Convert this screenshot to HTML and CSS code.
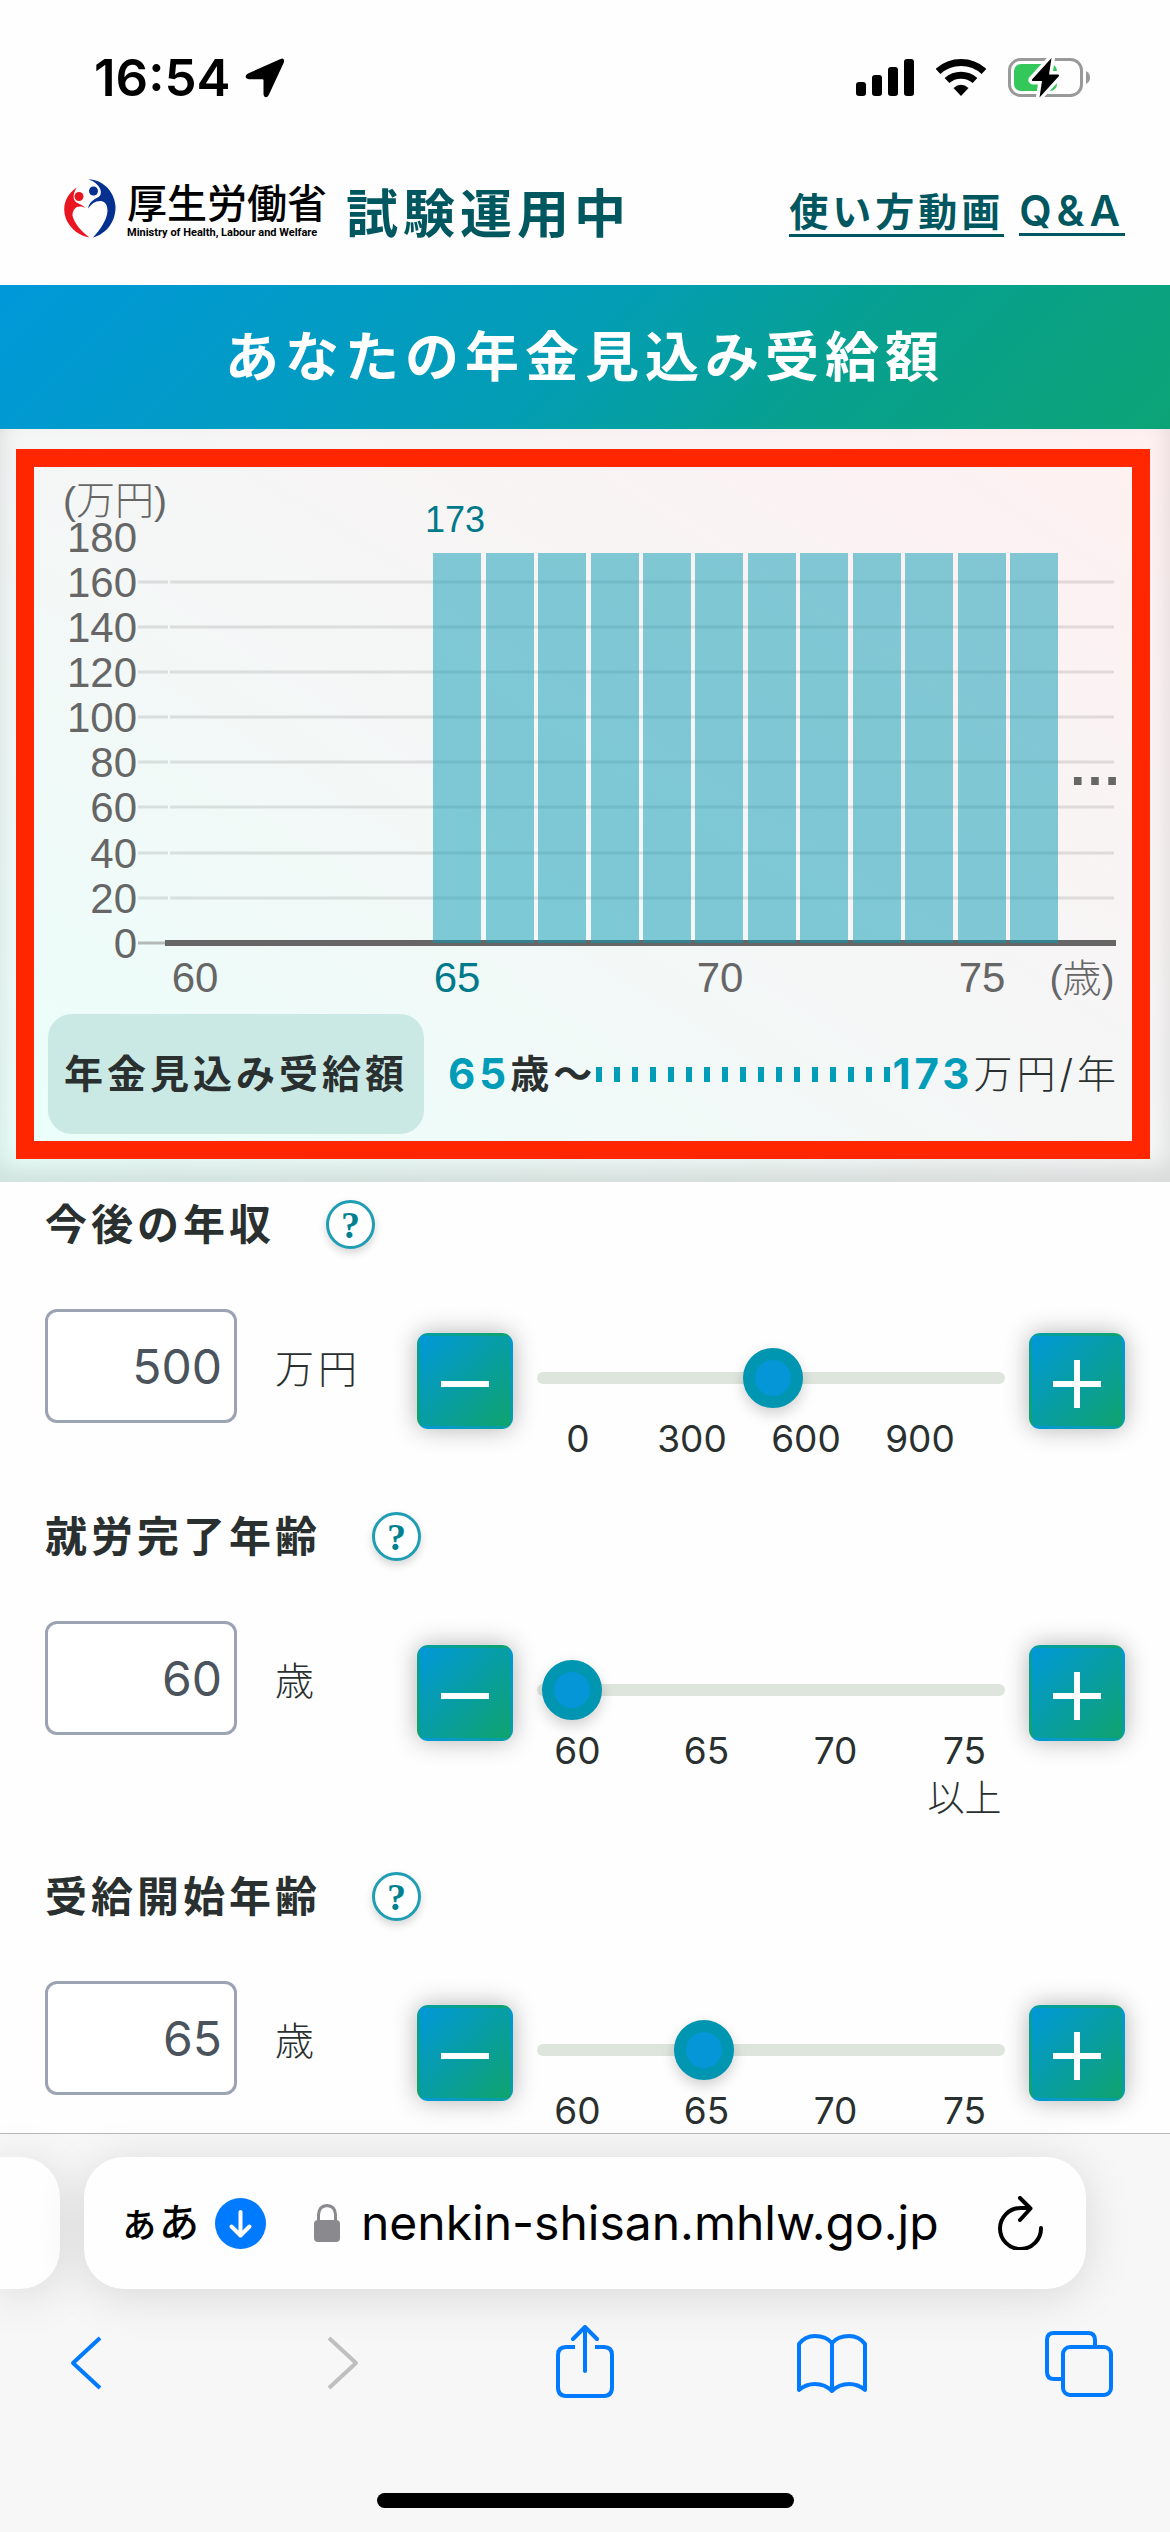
FILE: index.html
```html
<!DOCTYPE html>
<html lang="ja">
<head>
<meta charset="utf-8">
<meta name="viewport" content="width=device-width, initial-scale=1">
<title>あなたの年金見込み受給額</title>
<link rel="stylesheet" href="styles.css">
</head>
<body>
<div class="screen">
  <div class="status">
    <span class="status-time">16:54</span>
    <svg class="status-location" width="40" height="40" viewBox="0 0 40 40"><path d="M35 1.200 L3 15.500 Q.4 17 .6 19 Q1 21 4 21.200 H17.500 Q18.500 21.200 18.500 22.500 V36 Q18.700 39 21 39.200 Q23 39 24 36.500 L38.600 5 Q40 1 37.500 .4 Q36.500 .3 35 1.200Z"/></svg>
    <div class="status-icons">
      <svg width="58" height="38" viewBox="0 0 58 38"><rect x="0" y="23" width="10" height="14" rx="3"/><rect x="16" y="16" width="10" height="21" rx="3"/><rect x="32" y="8" width="10" height="29" rx="3"/><rect x="48" y="0" width="10" height="37" rx="3"/></svg>
      <svg width="50" height="38" viewBox="0 0 50 38"><path d="M2 12.500 A34 34 0 0 1 48 12.500" fill="none" stroke="#000" stroke-width="7"/><path d="M11 21.500 A21 21 0 0 1 39 21.500" fill="none" stroke="#000" stroke-width="7"/><path d="M17.500 29 Q25 22.500 32.500 29 L25 37Z"/></svg>
      <svg width="83" height="40" viewBox="0 0 83 40"><rect x="1.500" y="1.500" width="72" height="36" rx="11" fill="none" stroke="#999" stroke-width="3"/><rect x="6" y="6" width="43" height="27" rx="7" fill="#34c759"/><path d="M78 13 Q82 15 82 19.500 Q82 24 78 26Z" fill="#999"/><path d="M43.500 0 L24 21.500 Q23.500 23 25 23 H34 L31.500 39 L51 18 Q51.500 16.500 50 16.500 H41Z" stroke="#fefefe" stroke-width="7"/><path d="M43.500 0 L24 21.500 Q23.500 23 25 23 H34 L31.500 39.500 L51 18 Q51.500 16.500 50 16.500 H41Z"/></svg>
    </div>
  </div>

  <header class="header">
    <div class="logo">
      <svg width="52" height="59" viewBox="0 0 52 59">
        <g fill="#e91520"><circle cx="15" cy="17.500" r="4.500"/><path d="M13 8.500 C-1 17 -3.500 34 5.500 46 C10.500 53 17.500 57 25.500 58.500 C17 52 10 44 8.500 36.500 C8.500 28.500 15 25 22 29.500 C17.500 25 14 24.500 12.500 23.500 C8.500 21 8.500 14.500 13 8.500Z"/></g>
        <g fill="#04318f"><circle cx="29.500" cy="12" r="4.500"/><path d="M24.500 .5 C36 0 50 10 51.500 27 C52 43 42 55 29 58.500 C36 51 43 41 43.500 32 C43.500 24 39.500 22 36 22 C31 22 27.500 25 24 29.500 C25.500 22.500 30 20.500 34.500 18 C40 14.500 36 4 24.500 .5Z"/></g>
      </svg>
      <div class="logo-text">
        <span class="logo-ja">厚生労働省</span>
        <span class="logo-en">Ministry of Health, Labour and Welfare</span>
      </div>
    </div>
    <p class="trial">試験運用中</p>
    <nav class="links"><a href="#video">使い方動画</a><a class="latin" href="#qa">Q&amp;A</a></nav>
  </header>

  <h1 class="banner">あなたの年金見込み受給額</h1>

  <main class="main">
    <section class="result">
      <div class="frame">
        <svg class="chart" viewBox="0 0 1098 547" role="img" aria-label="年金見込み受給額のグラフ">
          <g class="grid">
            <path d="M104 115H134M136 115H1080M104 160H134M136 160H1080M104 205H134M136 205H1080M104 250H134M136 250H1080M104 295H134M136 295H1080M104 340H134M136 340H1080M104 386H134M136 386H1080M104 431H134M136 431H1080"/>
          </g>
          <path class="zero-tick" d="M104 476H131"/>
          <path class="axis" d="M131 476H1082"/>
          <g class="bars">
            <rect x="399" y="86" width="48" height="390"/><rect x="452" y="86" width="48" height="390"/><rect x="504" y="86" width="48" height="390"/><rect x="557" y="86" width="48" height="390"/><rect x="609" y="86" width="48" height="390"/><rect x="661" y="86" width="48" height="390"/><rect x="714" y="86" width="48" height="390"/><rect x="766" y="86" width="48" height="390"/><rect x="819" y="86" width="48" height="390"/><rect x="871" y="86" width="48" height="390"/><rect x="924" y="86" width="48" height="390"/><rect x="976" y="86" width="48" height="390"/>
          </g>
          <g class="labels">
            <text class="axis-unit" x="29" y="47">(万円)</text>
            <g text-anchor="end">
              <text x="103" y="85">180</text><text x="103" y="130">160</text><text x="103" y="175">140</text><text x="103" y="220">120</text><text x="103" y="265">100</text><text x="103" y="310">80</text><text x="103" y="355">60</text><text x="103" y="401">40</text><text x="103" y="446">20</text><text x="103" y="491">0</text>
            </g>
            <g text-anchor="middle">
              <text x="161" y="525">60</text><text class="accent" x="423" y="525">65</text><text x="686" y="525">70</text><text x="948" y="525">75</text><text class="axis-unit" x="1048" y="525">(歳)</text>
              <text class="accent value" x="421" y="65">173</text>
            </g>
            <text class="more" x="1034" y="318">…</text>
          </g>
        </svg>
        <div class="summary">
          <h2 class="pill">年金見込み受給額</h2>
          <p class="amount"><b class="num">65</b><b>歳～</b><span class="dots"></span><b class="num">173</b><span>万円/年</span></p>
        </div>
      </div>
    </section>

    <section class="field">
      <div class="field-head"><h2><label for="income">今後の年収</label></h2><button class="help" type="button" aria-label="今後の年収の説明">?</button></div>
      <div class="controls">
        <input class="box" id="income" type="text" inputmode="numeric" value="500">
        <span class="unit">万円</span>
        <button class="step" type="button" aria-label="減らす"><svg width="48" height="48" viewBox="0 0 48 48"><path d="M0 24H48"/></svg></button>
        <div class="slider">
          <input type="range" aria-label="今後の年収" min="0" max="990" step="any" value="500">
          <div class="ticks ticks-income"><span>0</span><span>300</span><span>600</span><span>900</span></div>
        </div>
        <button class="step" type="button" aria-label="増やす"><svg width="48" height="48" viewBox="0 0 48 48"><path d="M0 24H48M24 0V48"/></svg></button>
      </div>
    </section>

    <section class="field">
      <div class="field-head"><h2><label for="retire">就労完了年齢</label></h2><button class="help" type="button" aria-label="就労完了年齢の説明">?</button></div>
      <div class="controls">
        <input class="box" id="retire" type="text" inputmode="numeric" value="60">
        <span class="unit">歳</span>
        <button class="step" type="button" aria-label="減らす"><svg width="48" height="48" viewBox="0 0 48 48"><path d="M0 24H48"/></svg></button>
        <div class="slider">
          <input type="range" aria-label="就労完了年齢" min="59.8" max="75.3" step="any" value="60">
          <div class="ticks"><span>60</span><span>65</span><span>70</span><span>75<br><span class="above">以上</span></span></div>
        </div>
        <button class="step" type="button" aria-label="増やす"><svg width="48" height="48" viewBox="0 0 48 48"><path d="M0 24H48M24 0V48"/></svg></button>
      </div>
    </section>

    <section class="field">
      <div class="field-head"><h2><label for="start">受給開始年齢</label></h2><button class="help" type="button" aria-label="受給開始年齢の説明">?</button></div>
      <div class="controls">
        <input class="box" id="start" type="text" inputmode="numeric" value="65">
        <span class="unit">歳</span>
        <button class="step" type="button" aria-label="減らす"><svg width="48" height="48" viewBox="0 0 48 48"><path d="M0 24H48"/></svg></button>
        <div class="slider">
          <input type="range" aria-label="受給開始年齢" min="59.8" max="75.3" step="any" value="65">
          <div class="ticks"><span>60</span><span>65</span><span>70</span><span>75</span></div>
        </div>
        <button class="step" type="button" aria-label="増やす"><svg width="48" height="48" viewBox="0 0 48 48"><path d="M0 24H48M24 0V48"/></svg></button>
      </div>
    </section>
  </main>

  <footer class="browser">
    <div class="tabs">
      <div class="tab-prev"></div>
      <div class="address">
        <span class="reader">ぁあ</span>
        <svg class="download" width="51" height="51" viewBox="0 0 51 51"><circle cx="25.500" cy="25.500" r="25.500" fill="#007aff"/><path d="M25.500 14V37M16.500 28.500L25.500 37.500L34.500 28.500" fill="none" stroke="#fff" stroke-width="4" stroke-linecap="round" stroke-linejoin="round"/></svg>
        <svg class="lock" width="26" height="38" viewBox="0 0 26 38"><rect y="16" width="26" height="22" rx="4" fill="#8a8a8e"/><path d="M4.500 17V10.500Q5 2 13 1.500Q21 2 21.500 10.500V17" fill="none" stroke="#8a8a8e" stroke-width="3"/></svg>
        <span class="url">nenkin-shisan.mhlw.go.jp</span>
        <button class="plain reload" type="button" aria-label="再読み込み"><svg width="46" height="54" viewBox="0 0 46 54" fill="none" stroke="#000" stroke-width="4" stroke-linecap="round" stroke-linejoin="round"><path d="M43 32A20.500 20.500 0 1 1 22.500 12H32M22 2L32.500 12.500L22 24"/></svg></button>
      </div>
    </div>
    <nav class="toolbar">
      <button class="plain" type="button" aria-label="戻る"><svg width="100" height="74" viewBox="0 0 100 74"><path d="M64 13L37 38L64 63"/></svg></button>
      <button class="plain disabled" type="button" aria-label="進む"><svg width="100" height="74" viewBox="0 0 100 74"><path d="M44 13L71 38L44 63"/></svg></button>
      <button class="plain" type="button" aria-label="共有"><svg width="100" height="74" viewBox="-2 0 100 74"><path d="M40 22H31Q23 22 23 30V62Q23 71 31 71H69Q77 71 77 62V30Q77 22 69 22H60"/><path d="M50 46V3M38 14L50 2L62 14" stroke-linecap="round"/></svg></button>
      <button class="plain" type="button" aria-label="ブックマーク"><svg width="100" height="74" viewBox="0 0 100 74"><path d="M50 18V66Q43 59 33 59Q24 59 17 65V19Q23 11 33 11Q44 11 50 18Q56 11 67 11Q77 11 83 19V65Q76 59 67 59Q57 59 50 66"/></svg></button>
      <button class="plain" type="button" aria-label="タブ"><svg width="100" height="74" viewBox="0 0 100 74"><rect x="33" y="22" width="48" height="48" rx="7"/><path d="M33 54H24Q17 54 17 47V15Q17 8 24 8H58Q65 8 65 15V22"/></svg></button>
    </nav>
    <div class="home"></div>
  </footer>
</div>
</body>
</html>
```
FILE: styles.css
```css
* { box-sizing: border-box; }

body {
  margin: 0;
  background: #fefefe;
  color: #29302f;
  font-family: Inter, "Noto Sans CJK JP", sans-serif;
}

h1, h2, p { margin: 0; font-weight: 700; }

button { padding: 0; font: inherit; cursor: pointer; }

svg { display: block; flex: none; }

.screen {
  display: flex;
  flex-direction: column;
  height: 100vh;
  overflow: hidden;
}

/* status bar */
.status {
  display: flex;
  align-items: center;
  height: 156px;
  padding: 0 79px 0 94px;
  flex: none;
}

.status-time {
  color: #000;
  font-size: 51px;
  font-weight: 600;
  line-height: 60px;
}

.status-location { margin-left: 14px; }

.status-icons {
  display: flex;
  align-items: center;
  gap: 22px;
  margin-left: auto;
}

/* site header */
.header {
  display: flex;
  align-items: center;
  height: 129px;
  padding: 0 45px 24px 64px;
  flex: none;
}

.logo {
  display: flex;
  align-items: center;
  gap: 11px;
  color: #000;
}

.logo-text { display: flex; flex-direction: column; }

.logo-ja {
  font-family: "Noto Sans CJK JP", sans-serif;
  font-size: 40px;
  font-weight: 500;
  line-height: 48px;
}

.logo-en {
  font-family: Roboto, sans-serif;
  font-size: 11px;
  font-weight: 700;
  line-height: 16px;
}

.trial {
  margin: 12px 0 0 19px;
  color: #00575f;
  font-size: 52px;
  letter-spacing: 5px;
  line-height: 60px;
}

.links {
  display: flex;
  align-items: baseline;
  gap: 15px;
  margin: 8px 0 0 auto;
  font-size: 39px;
  letter-spacing: 4px;
  line-height: 48px;
  font-weight: 700;
}

.links a {
  border-bottom: 3px solid #00575f;
  color: #00575f;
  line-height: 44px;
  text-decoration: none;
}

.links .latin { font-size: 42px; font-weight: 600; letter-spacing: 5px; }

.banner {
  flex: none;
  padding: 43px 0 41px;
  background: linear-gradient(135deg, #0098d9, #039db5 48%, #07a08f 70%, #0ca476);
  color: #fff;
  font-size: 54px;
  letter-spacing: 6px;
  line-height: 60px;
  text-align: center;
}

.main {
  flex: 1;
  min-height: 0;
  overflow: hidden;
}

/* chart */
.result {
  padding: 20px 20px 23px 16px;
  background: linear-gradient(to top right, #eafffa, #f5f6f6 52%, #fff0f1);
  box-shadow: inset 0 -14px 24px rgba(0, 0, 0, .12);
}

.frame {
  padding-bottom: 7px;
  border: 18px solid #ff2600;
}

.chart { width: 100%; height: auto; }

.grid path { stroke: rgba(0, 0, 0, .1); stroke-width: 3; }
.zero-tick { stroke: #b3bab8; stroke-width: 3; }
.axis { stroke: #666; stroke-width: 6; }
.bars rect { fill: rgba(7, 154, 180, .5); }

.labels {
  fill: #666;
  font-family: "Liberation Sans", "Noto Sans CJK JP", sans-serif;
  font-size: 42px;
  font-weight: 300;
}

.labels .accent { fill: #00798a; }
.labels .axis-unit { font-size: 39px; }
.labels .value { font-size: 36px; }
.labels .more { font-size: 54px; font-weight: 700; }

.summary {
  display: flex;
  align-items: center;
  gap: 24px;
  padding: 0 12px 0 14px;
}

.pill {
  padding: 36px 16px;
  border-radius: 24px;
  background: #cbe9e4;
  font-size: 39px;
  letter-spacing: 4px;
  line-height: 48px;
  white-space: nowrap;
}

.amount {
  display: flex;
  flex: 1;
  align-items: center;
  font-size: 39px;
  font-weight: 300;
  letter-spacing: 4px;
  line-height: 48px;
  white-space: nowrap;
}

.amount b { font-weight: 700; }
.amount .num { color: #009cb8; font-size: 42px; }

.dots {
  flex: 1;
  height: 15px;
  background: repeating-linear-gradient(90deg, #009cb8 0 6px, transparent 6px 18px);
}

/* inputs */
.field { padding: 0 45px 49px; }

.result + .field { padding-top: 18px; }

.field-head {
  display: flex;
  align-items: center;
  gap: 51px;
  margin-bottom: 60px;
}

.field-head h2 {
  font-size: 42px;
  letter-spacing: 4px;
  line-height: 49px;
}

.help {
  width: 49px;
  height: 49px;
  border: 3px solid #1f9db3;
  border-radius: 50%;
  background: #fff;
  box-shadow: 0 4px 8px rgba(0, 0, 0, .16);
  color: #00818f;
  font-family: "Liberation Serif", serif;
  font-size: 38px;
  font-weight: 700;
  line-height: 40px;
}

.controls {
  display: grid;
  grid-template-columns: 192px 180px 96px 1fr 96px;
  align-items: start;
}

.box {
  width: 192px;
  height: 114px;
  padding: 0 12px;
  border: 3px solid #9ca3b2;
  border-radius: 12px;
  background: #fff;
  color: #4b535c;
  font-family: Inter, sans-serif;
  font-size: 48px;
  text-align: right;
}

.unit {
  padding: 33px 0 0 38px;
  font-size: 39px;
  font-weight: 300;
  letter-spacing: 4px;
  line-height: 54px;
}

.step {
  display: grid;
  place-items: center;
  height: 96px;
  margin-top: 24px;
  padding-top: 6px;
  border: 3px solid transparent;
  border-radius: 11px;
  background: linear-gradient(135deg, #0098d8, #0fa36e);
  box-shadow: 0 0 24px rgba(0, 0, 0, .3);
}

.step path { stroke: #fff; stroke-width: 6; }

.slider { padding-top: 39px; }

.slider input {
  display: block;
  appearance: none;
  width: calc(100% - 48px);
  height: 60px;
  margin: 0 24px 7px;
  background: transparent;
}

.slider input::-webkit-slider-runnable-track {
  height: 12px;
  border-radius: 6px;
  background: #dde5dc;
}

.slider input::-webkit-slider-thumb {
  appearance: none;
  width: 60px;
  height: 60px;
  margin-top: -24px;
  border: 12px solid #0095b0;
  border-radius: 50%;
  background: #0496d6;
  box-shadow: 0 6px 14px rgba(0, 0, 0, .18);
}

.ticks {
  display: grid;
  grid-template-columns: repeat(4, 1fr);
  font-size: 37px;
  font-weight: 400;
  line-height: 48px;
  text-align: center;
}

.ticks-income { padding: 0 52px 0 8px; }

.above { font-weight: 300; }

/* browser chrome */
.browser {
  flex: none;
  position: relative;
  border-top: 1px solid #b9b9b9;
  background: #f7f7f7;
}

.tabs {
  display: flex;
  gap: 24px;
  padding: 23px 84px 0 0;
}

.tab-prev {
  width: 60px;
  border-radius: 0 40px 40px 0;
  background: #fefefe;
  box-shadow: 0 6px 48px rgba(0, 0, 0, .13);
}

.address {
  display: flex;
  flex: 1;
  align-items: center;
  height: 132px;
  padding: 0 42px 0 35px;
  border-radius: 40px;
  background: #fefefe;
  box-shadow: 0 6px 48px rgba(0, 0, 0, .13);
  color: #000;
}

.reader {
  font-size: 40px;
  font-weight: 500;
  line-height: 60px;
}

.download { margin-left: 16px; }
.lock { margin-left: 48px; }

.url {
  margin-left: 21px;
  font-size: 48px;
  line-height: 60px;
}

.plain {
  border: 0;
  background: none;
}

.reload { margin-left: auto; }

.toolbar {
  display: flex;
  justify-content: space-between;
  padding: 36px 40px 94px 36px;
}

.toolbar path, .toolbar rect {
  fill: none;
  stroke: #007aff;
  stroke-width: 4;
  stroke-linejoin: round;
}

.toolbar .disabled path { stroke: #bfbfbf; }

.home {
  width: 417px;
  height: 15px;
  margin: 0 auto 24px;
  border-radius: 8px;
  background: #000;
}
```
